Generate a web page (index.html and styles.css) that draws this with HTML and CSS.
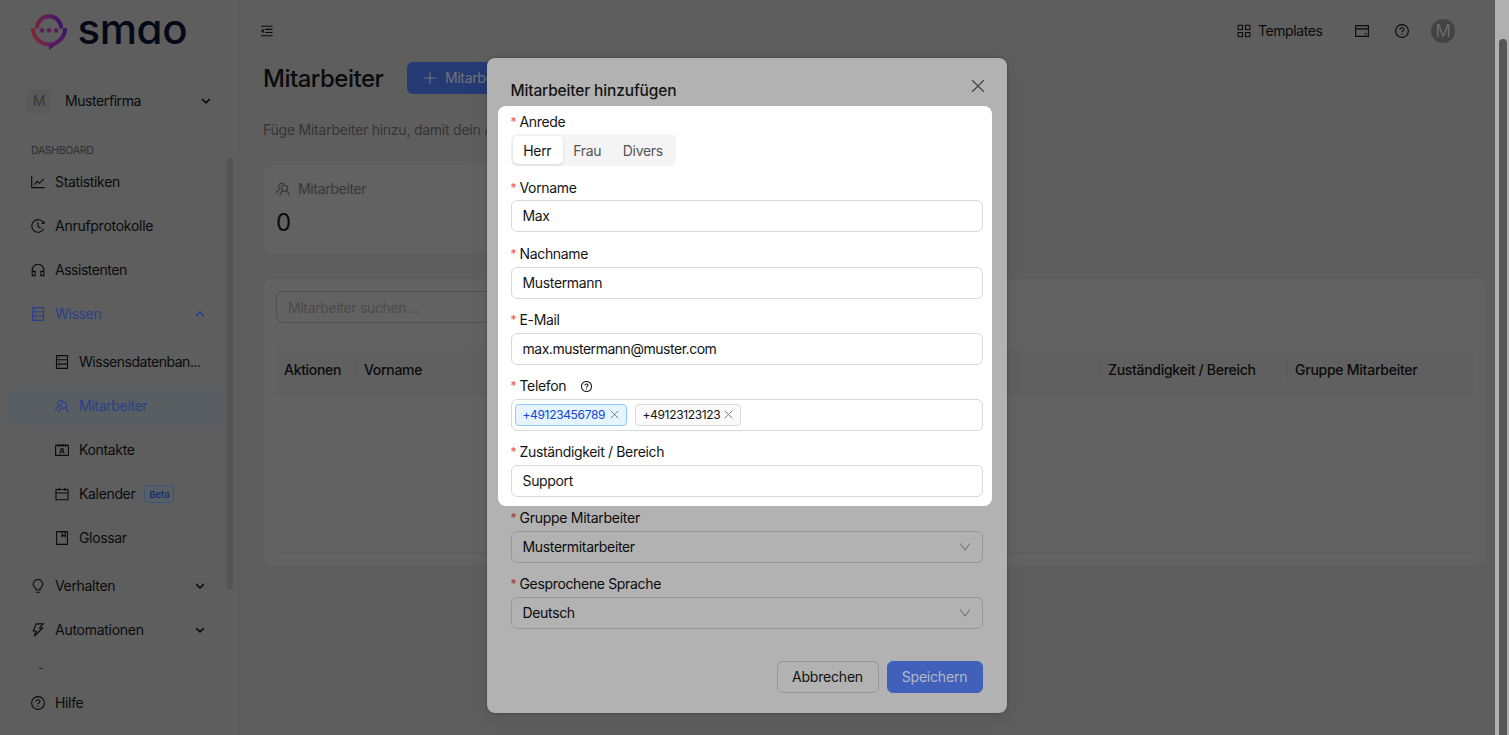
FILE: index.html
```html
<!DOCTYPE html>
<html lang="de">
<head>
<meta charset="utf-8">
<title>smao – Mitarbeiter</title>
<link rel="stylesheet" href="styles.css">
</head>
<body>
<svg class="defs" width="0" height="0">
  <symbol id="chart" viewBox="0 0 14 14"><path d="M.7 1v11.6h13M3.3 9.6l3-3.3 2.2 2 4.2-4.5"/></symbol>
  <symbol id="history" viewBox="0 0 14 14"><path d="M12.4 3.6A6.3 6.3 0 1 0 12.7 9.8M13 2.300v2.200h-2.300M7 3.200v4.200l2.600 1.800"/></symbol>
  <symbol id="headset" viewBox="0 0 14 14"><path d="M1.2 12.6V7a5.8 5.8 0 0 1 11.6 0v5.6H9.9V8.4h2.9M1.2 8.4h2.9v4.2H1.2z"/></symbol>
  <symbol id="database" viewBox="0 0 14 14"><path d="M1.5.6h11v12.8h-11zM1.5 4.8h11M1.5 9.1h11M3.6 2.7h1M3.6 7h1M3.6 11.2h1"/></symbol>
  <symbol id="team" viewBox="0 0 14 14"><path d="M.8 11.5c.1-2.500 1.300-3.800 2.700-4.600A3.100 3.100 0 1 1 8.200 2.400M3.900 13.300c.1-2.300 1.300-3.700 3-4.400M10.300 8.900c1.700.7 2.700 2.100 2.800 4.400"/><circle cx="8.600" cy="6.300" r="3"/></symbol>
  <symbol id="contacts" viewBox="0 0 14 14"><path d="M.6 2.400h12.800v10H.6zM3.400 1v2.700M5.800 1v2.700M8.200 1v2.700M10.600 1v2.700M4.800 10.600c.1-1.400 1-2.100 2.200-2.100s2.100.7 2.200 2.100"/><circle cx="7" cy="7" r="1.400"/></symbol>
  <symbol id="calendar" viewBox="0 0 14 14"><path d="M1 2.500h12v10.300H1zM1 6h12M4.200.8v3M9.800.8v3"/></symbol>
  <symbol id="book" viewBox="0 0 14 14"><path d="M1.600.6h10.800v12.800H1.600zM7 .6v5l1.600-1.300 1.600 1.300v-5"/></symbol>
  <symbol id="bulb" viewBox="0 0 14 14"><path d="M4.900 10.700V9.400A4.700 4.700 0 1 1 9.100 9.400v1.300zM5.200 13.200h3.600"/></symbol>
  <symbol id="bolt" viewBox="0 0 14 14"><path d="M5.300.9h7L8.500 5h3.200l-8.300 8 1.900-5H2.200z"/></symbol>
  <symbol id="help" viewBox="0 0 14 14"><circle cx="7" cy="7" r="6.400"/><path d="M5 5.600c0-2.500 4-2.400 4-.1 0 1.400-2 1.400-2 2.700M7 9.500v1.200"/></symbol>
  <symbol id="down" viewBox="0 0 10 10"><path d="M1.200 3.100 5 6.900l3.800-3.800"/></symbol>
  <symbol id="up" viewBox="0 0 10 10"><path d="M1.200 6.900 5 3.100l3.800 3.800"/></symbol>
  <symbol id="x" viewBox="0 0 14 14"><path d="M1.200 1.200l11.600 11.600M12.800 1.200 1.200 12.800"/></symbol>
  <symbol id="caret" viewBox="0 0 12 12"><path d="M1.200 2.500 6 9l4.800-6.500"/></symbol>
</svg>

<div class="app">
  <aside class="sidebar">
    <div class="logo">
      <svg width="170" height="62" viewBox="0 -12 170 62">
        <defs><linearGradient id="brand" gradientUnits="userSpaceOnUse" x1="1" y1="24" x2="37" y2="14"><stop offset="0" stop-color="#7e2931"/><stop offset=".5" stop-color="#641e5c"/><stop offset="1" stop-color="#30136c"/></linearGradient></defs>
        <g fill="none" stroke="url(#brand)" stroke-width="4"><path d="M6.900 16.400a12.100 12.100 0 0 1 24.200 0"/><path d="M2.900 16.300a16.100 16.100 0 0 0 32.200 0"/></g>
        <path fill="#4f1a62" d="M19 32v6.200l9.500-7.200z"/>
        <g fill="#581c5c"><circle cx="12" cy="18.500" r="2.200"/><circle cx="19" cy="18.500" r="2.200"/><circle cx="26" cy="18.500" r="2.200"/></g>
        <text class="wordmark" x="47.500" y="32" textLength="110">smao</text>
      </svg>
    </div>
    <div class="company"><span class="initial">M</span><span class="company-name">Musterfirma</span><svg class="arrow"><use href="#down"/></svg></div>
    <div class="caption">DASHBOARD</div>
    <div class="menu-wrap">
      <nav class="menu">
        <a class="item"><svg class="icon"><use href="#chart"/></svg><span>Statistiken</span></a>
        <a class="item"><svg class="icon"><use href="#history"/></svg><span class="loose">Anrufprotokolle</span></a>
        <a class="item"><svg class="icon"><use href="#headset"/></svg><span class="tight">Assistenten</span></a>
        <a class="item blue"><svg class="icon"><use href="#database"/></svg><span>Wissen</span><svg class="arrow"><use href="#up"/></svg></a>
        <div class="submenu">
          <a class="item"><svg class="icon"><use href="#database"/></svg><span class="tight">Wissensdatenban...</span></a>
          <a class="item blue active"><svg class="icon"><use href="#team"/></svg><span>Mitarbeiter</span></a>
          <a class="item"><svg class="icon"><use href="#contacts"/></svg><span>Kontakte</span></a>
          <a class="item"><svg class="icon"><use href="#calendar"/></svg><span>Kalender</span><span class="beta">Beta</span></a>
          <a class="item"><svg class="icon"><use href="#book"/></svg><span>Glossar</span></a>
        </div>
        <a class="item"><svg class="icon"><use href="#bulb"/></svg><span>Verhalten</span><svg class="arrow"><use href="#down"/></svg></a>
        <a class="item"><svg class="icon"><use href="#bolt"/></svg><span class="loose">Automationen</span><svg class="arrow"><use href="#down"/></svg></a>
        <div class="dash">-</div>
        <a class="item"><svg class="icon"><use href="#help"/></svg><span>Hilfe</span></a>
      </nav>
      <div class="menu-scroll"></div>
    </div>
  </aside>

  <main class="main">
    <header class="topbar">
      <svg class="fold" width="14" height="12" viewBox="0 0 14 12"><path d="M1 1.200h11.500M5 4.400h7.500M5 7.500h7.500M1 10.700h11.500"/><path class="solid" d="M3.700 3.600v4.600L1 5.900z"/></svg>
      <div class="tools">
        <svg class="icon grid-icon" viewBox="0 0 14 14"><path d="M1.200 1.200h4.300v4.300H1.200zM8.500 1.200h4.300v4.300H8.500zM1.200 8.500h4.300v4.300H1.200zM8.500 8.500h4.300v4.300H8.500z"/></svg>
        <span class="templates">Templates</span>
        <svg class="icon card-icon" viewBox="0 0 14 14"><path d="M.6 1.600h12.800v10.800H.6zM.6 4.900h12.800M9.300 9.800h2.300"/></svg>
        <svg class="icon help-icon"><use href="#help"/></svg>
        <span class="avatar">M</span>
      </div>
    </header>
    <div class="heading"><h1>Mitarbeiter</h1><button class="add"><svg class="plus" viewBox="0 0 14 14"><path d="M7 1v12M1 7h12"/></svg>Mitarbeiter</button></div>
    <p class="intro">Füge Mitarbeiter hinzu, damit dein A</p>
    <section class="stat"><div class="stat-head"><svg class="icon"><use href="#team"/></svg>Mitarbeiter</div><div class="stat-value">0</div></section>
    <section class="panel">
      <div class="search">Mitarbeiter suchen ...</div>
      <div class="thead">
        <span class="th th-a">Aktionen</span><span class="th th-v">Vorname</span><span class="th th-z">Zuständigkeit / Bereich</span><span class="th th-g">Gruppe Mitarbeiter</span>
      </div>
      <div class="tbody"></div>
    </section>
  </main>
  <div class="page-scroll"><div class="thumb"></div></div>
</div>

<div class="modal">
  <div class="modal-head"><h2>Mitarbeiter hinzufügen</h2><svg class="close"><use href="#x"/></svg></div>
  <div class="spotlight">
    <div class="field"><label>Anrede</label><div class="segmented"><span class="seg on">Herr</span><span class="seg">Frau</span><span class="seg">Divers</span></div></div>
    <div class="field"><label>Vorname</label><div class="input">Max</div></div>
    <div class="field"><label>Nachname</label><div class="input">Mustermann</div></div>
    <div class="field"><label>E-Mail</label><div class="input tight">max.mustermann@muster.com</div></div>
    <div class="field"><label>Telefon<svg class="tip"><use href="#help"/></svg></label><div class="input tags"><span class="tag tag-blue">+49123456789<svg><use href="#x"/></svg></span><span class="tag">+49123123123<svg><use href="#x"/></svg></span></div></div>
    <div class="field"><label>Zuständigkeit / Bereich</label><div class="input">Support</div></div>
  </div>
  <div class="rest">
    <div class="field"><label class="loose">Gruppe Mitarbeiter</label><div class="input select">Mustermitarbeiter<svg><use href="#caret"/></svg></div></div>
    <div class="field"><label>Gesprochene Sprache</label><div class="input select">Deutsch<svg><use href="#caret"/></svg></div></div>
  </div>
  <footer class="actions"><button class="btn">Abbrechen</button><button class="btn primary">Speichern</button></footer>
</div>
</body>
</html>
```
FILE: styles.css
```css
* { box-sizing: border-box; }
body {
  margin: 0; width: 1509px; height: 735px; overflow: hidden; position: relative;
  background: #5e5e5e; color: #0b0b0b;
  font: 14px/22px Inter, "Noto Sans", sans-serif; letter-spacing: -0.34px;
}
h1, h2, p { margin: 0; font-weight: 500; }
button { font: inherit; letter-spacing: inherit; }
.defs { position: absolute; }
svg { fill: none; stroke: currentColor; stroke-width: 1.1; flex: none; display: block; }
.icon { width: 14px; height: 14px; }
.loose { letter-spacing: -0.27px; }
.tight { letter-spacing: -0.47px; }
.app { display: flex; height: 735px; }

.sidebar { width: 239px; flex: none; border-right: 1px solid #595959; }
.logo { height: 82px; padding: 0 0 0 30px; }
.logo svg { stroke: none; overflow: visible; }
.wordmark { font: 500 42px Inter, sans-serif; font-feature-settings: "cv11"; letter-spacing: 0; fill: #030916; }
.company { display: flex; align-items: center; height: 38px; padding: 0 27px; }
.initial { width: 24px; height: 24px; border-radius: 5px; background: #5a5a5a; color: #373737; text-align: center; line-height: 24px; }
.company-name { margin-left: 14px; flex: 1; letter-spacing: -0.42px; }
.arrow { width: 10px; height: 10px; stroke-width: 1.500; margin-left: auto; }
.caption { height: 38px; padding: 20px 0 0 31px; font-size: 10.500px; line-height: 21px; color: #2e2e2e; letter-spacing: -0.3px; }
.menu-wrap { display: flex; height: 577px; }
.menu { width: 219px; padding: 2px 0 0 8px; margin-right: 8px; flex: none; }
.menu .item { display: flex; align-items: center; height: 40px; margin: 2px 0 4px; padding: 0 23px; width: 216px; border-radius: 8px; }
.menu .item + .item { margin-top: 0; }
.item > span { margin-left: 10px; white-space: nowrap; }
.item .arrow { margin-right: -4px; margin-top: -1px; }
.submenu { padding: 2px 0; }
.menu .submenu .item { padding-left: 47px; }
.blue { color: #29418b; }
.active { background: #595e62; }
.item > .beta { margin-left: 9px; width: 30px; height: 18px; border: 1px solid #365679; border-radius: 4px; background: #595e62; color: #0b2b72; font-size: 9.500px; line-height: 17px; text-align: center; font-weight: 500; letter-spacing: -0.1px; }
.dash { height: 27px; padding-left: 30px; font-size: 12px; color: #222; line-height: 27px; }
.menu-scroll { width: 6px; height: 432px; border-radius: 3px; background: #545454; }

.main { flex: 1; padding: 0 10px 0 25px; min-width: 0; }
.topbar { height: 60px; display: flex; align-items: center; justify-content: space-between; padding-top: 1px; }
.fold { margin-left: -4px; }
.fold .solid { fill: #0b0b0b; stroke: none; }
.tools { display: flex; align-items: center; padding-right: 30px; }
.templates { margin-left: 7px; width: 97px; letter-spacing: -0.42px; }
.card-icon { margin-right: 26px; }
.help-icon { margin-right: 22px; }
.avatar { width: 24px; height: 24px; border-radius: 50%; background: #434343; color: #6b6b6b; text-align: center; font-size: 17px; line-height: 25px; }
.heading { display: flex; align-items: center; height: 37px; }
h1 { width: 144px; margin-left: -1px; font-size: 24px; line-height: 36px; letter-spacing: -0.5px; padding-top: 1px; }
.add { width: 140px; height: 32px; display: flex; align-items: center; gap: 8px; padding: 0 16px; border: 0; border-radius: 6px; background: #253973; color: #707478; margin-top: -1px; }
.plus { width: 14px; height: 14px; }
.intro { margin: 22px 0 0 -1px; color: #353535; font-weight: 400; letter-spacing: -0.24px; white-space: nowrap; width: 226px; }
.stat { margin-top: 24px; width: 400px; height: 88px; border-radius: 8px; background: #626262; padding: 12px; }
.stat-head { display: flex; align-items: center; gap: 8px; color: #373737; padding-top: 1px; }
.stat-value { font-size: 24px; line-height: 32px; margin-top: 7px; }
.panel { margin-top: 26px; height: 286px; border-radius: 8px; background: #626262; padding: 12px; }
.search { width: 400px; height: 32px; border: 1px solid #515151; border-radius: 6px; padding: 5px 11px; line-height: 21px; color: #4a4a4a; }
.thead { display: flex; margin-top: 25px; height: 46px; background: #606060; border-bottom: 1px solid #5b5b5b; border-radius: 8px 8px 0 0; align-items: center; }
.th { padding-left: 8px; font-weight: 500; white-space: nowrap; border-right: 1px solid #5b5b5b; line-height: 20px; height: 22px; letter-spacing: -0.3px; }
.th-a { width: 80px; } .th-v { width: 744px; } .th-z { width: 187px; } .th-g { border: 0; letter-spacing: -0.25px; }
.tbody { height: 159px; border-bottom: 1px solid #5b5b5b; }
.page-scroll { width: 14px; background: #b0b0b0; padding: 39px 2px 0 4px; }
.thumb { height: 696px; background: #565656; border-radius: 4px 4px 0 0; }

/* Dialog floats over the page */
.modal { position: absolute; left: 487px; top: 58px; width: 519.500px; height: 655px; border-radius: 8px; background: #b2b2b2; box-shadow: 0 0 2px #333, 0 6px 20px rgba(0,0,0,.08); }
.modal-head { height: 48px; display: flex; justify-content: space-between; padding: 21px 21.500px 0 23.500px; }
h2 { font-size: 15.500px; line-height: 24px; color: #141414; letter-spacing: -0.15px; }
.close { width: 14px; height: 14px; color: #464646; stroke-width: 1.300; }
.spotlight { height: 400px; width: 494px; margin-left: 11px; padding: 4.300px 10px 0 12.500px; background: #fff; border-radius: 8px; color: #151515; }
.rest { padding: 1.100px 0 0 23.500px; height: 133px; }
.field { height: 66.130px; }
label { display: flex; align-items: center; height: 22px; margin-bottom: 2px; padding-top: 1px; }
.rest label { padding-top: 0; }
label::before { content: "*"; color: #ff4d4f; font-size: 12px; width: 9px; line-height: 18px; }
.rest label::before { color: #b32d30; }
.input { height: 32px; width: 472px; border: 1px solid #d9d9d9; border-radius: 6px; padding: 0 11px; line-height: 30px; display: flex; align-items: center; }
.rest .input { border-color: #979797; }
.tip { width: 11px; height: 11px; margin-left: 15px; stroke-width: 1.300; }
.segmented { display: inline-flex; height: 32px; width: 165px; padding: 2px; border-radius: 6px; background: #f4f4f4; vertical-align: top; }
.seg { padding: 0 10.800px; line-height: 29px; color: #555; }
.seg.on { width: 51px; background: #fff; color: #151515; border-radius: 5px; box-shadow: 0 1px 3px rgba(0,0,0,.12); }
.tags { padding: 0 3px; gap: 8px; }
.tag { height: 22px; display: flex; align-items: center; justify-content: space-between; width: 106px; padding: 0 7px; border: 1px solid #d9d9d9; border-radius: 4px; background: #fafafa; font-size: 12px; line-height: 20px; }
.tag-blue { width: 112px; border-color: #91caff; background: #e6f4ff; color: #0f45d8; }
.tag svg { width: 9px; height: 9px; color: #777; stroke-width: 1.500; }
.select { justify-content: space-between; }
.select svg { width: 12px; height: 12px; color: #777; }
.actions { display: flex; justify-content: flex-end; gap: 8px; padding: 22px 24px 0; }
.btn { width: 102px; height: 32px; border: 1px solid #979797; border-radius: 6px; background: #b2b2b2; padding: 0; color: #111; letter-spacing: -0.2px; }
.btn.primary { width: 96px; background: #4060b9; border-color: #4060b9; color: #b5bac6; }
```
